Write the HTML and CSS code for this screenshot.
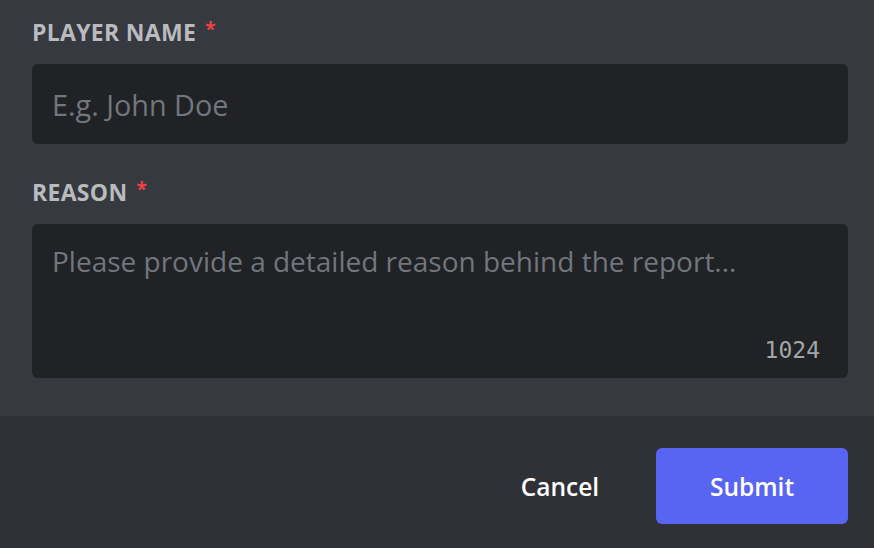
FILE: index.html
```html
<!DOCTYPE html>
<html>
<head>
<meta charset="utf-8">
<link rel="stylesheet" href="styles.css">
</head>
<body>
<div class="modal">
  <div class="form">
    <label class="label">Player Name<span class="req">*</span></label>
    <div class="input"><span class="ph">E.g. John Doe</span></div>
    <label class="label label-2">Reason<span class="req">*</span></label>
    <div class="textarea">
      <span class="ph">Please provide a detailed reason behind the report...</span>
      <span class="counter">1024</span>
    </div>
  </div>
  <div class="footer">
    <button class="btn-link">Cancel</button>
    <button class="btn-primary">Submit</button>
  </div>
</div>
</body>
</html>
```

FILE: styles.css
```css
html, body {
  margin: 0;
  padding: 0;
  background: #36393f;
  height: 100%;
  overflow: hidden;
}
.modal {
  display: flex;
  flex-direction: column;
  width: 874px;
  height: 548px;
  font-family: "Open Sans", "Noto Sans", sans-serif;
}
.form {
  background: #36393f;
  padding: 16px 26px 38px 32px;
  display: flex;
  flex-direction: column;
}
.label {
  display: block;
  height: 32px;
  line-height: 32px;
  font-size: 23px;
  font-weight: 700;
  text-transform: uppercase;
  color: #b9bbbe;
  margin-bottom: 16px;
  letter-spacing: 0.3px;
}
.label-2 {
  margin-top: 32px;
}
.req {
  display: inline-block;
  color: #ed4245;
  font-size: 19px;
  line-height: 19px;
  vertical-align: top;
  margin-left: 9px;
  position: relative;
  top: 4px;
}
.input {
  height: 80px;
  background: #202225;
  border-radius: 6px;
  display: flex;
  align-items: center;
  padding: 0 20px;
}
.ph {
  font-size: 28px;
  color: #72767d;
}
.input .ph {
  font-size: 28.8px;
}
.textarea {
  position: relative;
  height: 154px;
  background: #202225;
  border-radius: 6px;
  padding: 18px 20px;
  box-sizing: border-box;
}
.counter {
  position: absolute;
  right: 28px;
  bottom: 15px;
  font-family: "DejaVu Sans Mono", monospace;
  font-size: 23px;
  color: #a3a6aa;
}
.footer {
  flex: 1;
  background: #2f3136;
  display: flex;
  justify-content: flex-end;
  align-items: flex-start;
  padding: 32px 26px 0 0;
  gap: 16px;
}
.btn-link, .btn-primary {
  font-family: "Open Sans", "Noto Sans", sans-serif;
  font-size: 24.5px;
  font-weight: 600;
  color: #fff;
  border: none;
  height: 76px;
  border-radius: 6px;
  cursor: pointer;
}
.btn-link {
  background: transparent;
  width: 192px;
  padding: 0;
  margin-right: -16px;
  text-align: center;
}
.btn-primary {
  background: #5865f2;
  width: 192px;
}
```
